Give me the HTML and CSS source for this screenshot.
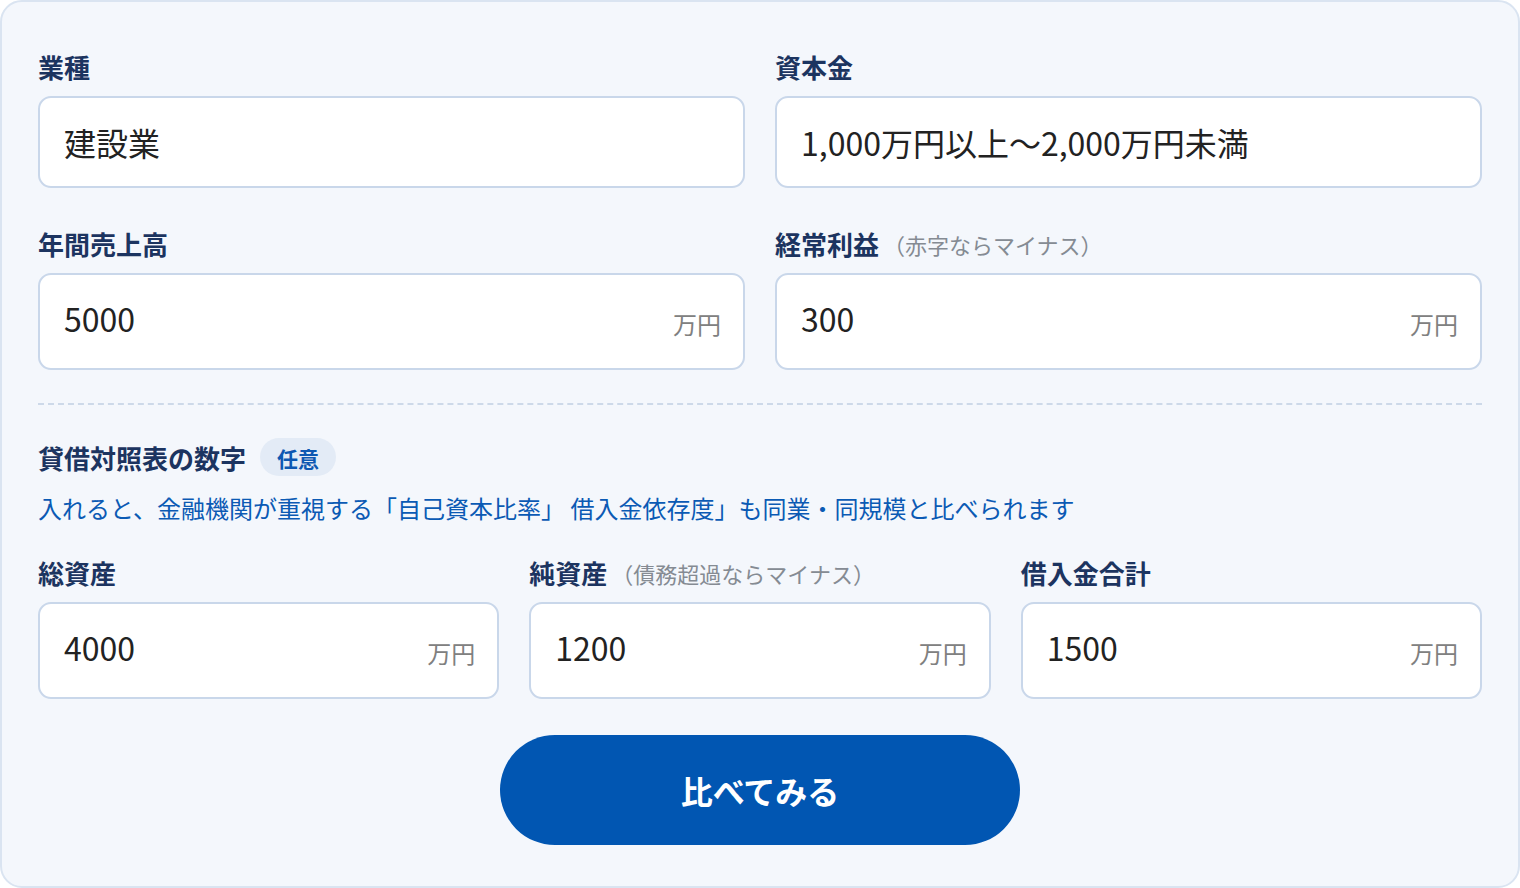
FILE: index.html
```html
<!doctype html>
<html lang="ja">
<head>
<meta charset="utf-8">
<title>同業比較</title>
<link rel="stylesheet" href="styles.css">
</head>
<body>

<form class="card">
  <div class="grid grid-2">
    <div class="field">
      <label class="label">業種</label>
      <div class="box box-select">
        <input class="value" type="text" value="建設業" readonly>
      </div>
    </div>
    <div class="field">
      <label class="label">資本金</label>
      <div class="box box-select">
        <input class="value" type="text" value="1,000万円以上〜2,000万円未満" readonly>
      </div>
    </div>
    <div class="field">
      <label class="label">年間売上高</label>
      <div class="box">
        <input class="value" type="text" value="5000">
        <span class="unit">万円</span>
      </div>
    </div>
    <div class="field">
      <label class="label">経常利益<span class="note">（赤字ならマイナス）</span></label>
      <div class="box">
        <input class="value" type="text" value="300">
        <span class="unit">万円</span>
      </div>
    </div>
  </div>

  <hr class="divider">

  <div class="section-head">
    <span class="section-title">貸借対照表の数字</span>
    <span class="badge">任意</span>
  </div>
  <p class="section-desc">入れると、金融機関が重視する「自己資本比率」 借入金依存度」も同業・同規模と比べられます</p>

  <div class="grid grid-3">
    <div class="field">
      <label class="label">総資産</label>
      <div class="box">
        <input class="value" type="text" value="4000">
        <span class="unit">万円</span>
      </div>
    </div>
    <div class="field">
      <label class="label">純資産<span class="note">（債務超過ならマイナス）</span></label>
      <div class="box">
        <input class="value" type="text" value="1200">
        <span class="unit">万円</span>
      </div>
    </div>
    <div class="field">
      <label class="label">借入金合計</label>
      <div class="box">
        <input class="value" type="text" value="1500">
        <span class="unit">万円</span>
      </div>
    </div>
  </div>

  <div class="actions">
    <button type="button" class="submit">比べてみる</button>
  </div>
</form>

</body>
</html>
```

FILE: styles.css
```css
html, body {
  margin: 0;
  padding: 0;
  background: #ffffff;
}

body {
  font-family: "Noto Sans CJK JP", "Noto Sans", sans-serif;
}

.card {
  box-sizing: border-box;
  width: 1520px;
  margin: 0;
  padding: 46px 36px 41px 36px;
  background: #f4f7fc;
  border: 2px solid #dae4f1;
  border-radius: 22px;
}

.grid {
  display: grid;
  column-gap: 30px;
  row-gap: 37px;
}

.grid-2 {
  grid-template-columns: 1fr 1fr;
}

.grid-3 {
  grid-template-columns: 1fr 1fr 1fr;
}

.field {
  display: flex;
  flex-direction: column;
}

.label {
  display: flex;
  align-items: center;
  height: 36px;
  font-size: 26px;
  font-weight: 700;
  color: #1c3460;
  margin-bottom: 12px;
  white-space: nowrap;
}

.note {
  font-size: 22px;
  font-weight: 400;
  color: #858b93;
  margin-left: 4px;
  padding-top: 2px;
}

.box {
  box-sizing: border-box;
  display: flex;
  align-items: center;
  height: 97px;
  padding: 0 22px 0 24px;
  background: #ffffff;
  border: 2px solid #c9d7ea;
  border-radius: 13px;
}

.box-select {
  height: 92px;
}

.value {
  flex: 1;
  min-width: 0;
  border: none;
  outline: none;
  background: transparent;
  padding: 0 0 7px 0;
  font-family: "Noto Sans CJK JP", "Noto Sans", sans-serif;
  font-size: 32px;
  color: #222222;
}

.box-select .value {
  padding-bottom: 0;
}

.unit {
  font-size: 24px;
  color: #808080;
  margin-top: 4px;
}

.divider {
  border: none;
  border-top: 2px dashed #cdd9e9;
  margin: 33px 0 33px 0;
  height: 0;
}

.section-head {
  display: flex;
  align-items: center;
  gap: 14px;
  height: 38px;
}

.section-title {
  font-size: 26px;
  font-weight: 700;
  color: #1c3460;
}

.badge {
  display: inline-flex;
  align-items: center;
  box-sizing: border-box;
  height: 38px;
  padding: 3px 17px 0 17px;
  border-radius: 19px;
  background: #e3ebf6;
  color: #0d58b2;
  font-size: 21px;
  font-weight: 700;
  line-height: 1;
}

.section-desc {
  margin: 14px 0 28px 0;
  font-size: 24px;
  line-height: 36px;
  color: #0b5ab4;
  white-space: nowrap;
}

.actions {
  display: flex;
  justify-content: center;
  margin-top: 36px;
}

.submit {
  width: 520px;
  height: 110px;
  border: none;
  border-radius: 55px;
  background: #0156b2;
  color: #ffffff;
  font-family: "Noto Sans CJK JP", "Noto Sans", sans-serif;
  font-size: 32px;
  font-weight: 700;
  cursor: pointer;
}
```
